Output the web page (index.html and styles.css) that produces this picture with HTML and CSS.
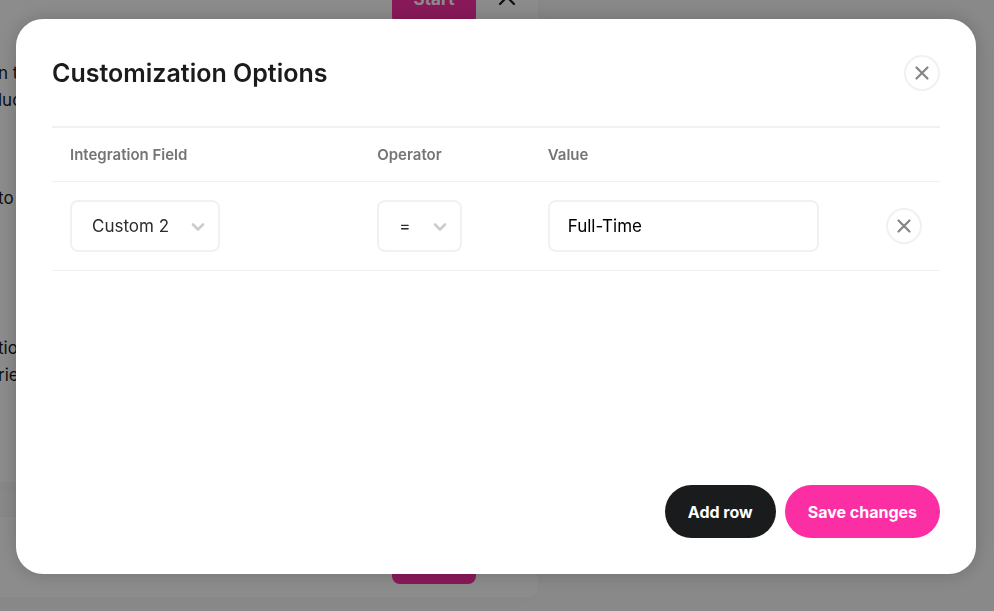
FILE: index.html
```
<!DOCTYPE html>
<html lang="en">
<head>
    <meta charset="UTF-8">
    <meta name="viewport" content="width=device-width, initial-scale=1.0">
    <title>Customization Options</title>
    <link rel="stylesheet" href="styles.css">
</head>
<body>
    <!-- Page behind the modal -->
    <main class="page">
        <section class="card card-open">
            <div class="card-actions">
                <button type="button" class="start-button">Start</button>
                <button type="button" class="collapse-button" aria-label="Collapse">
                    <svg width="18" height="12" viewBox="0 0 18 12" fill="none" stroke="#1a1b1c" stroke-width="2.2" stroke-linecap="round"><path d="M2 10 9 3l7 7"/></svg>
                </button>
            </div>
            <div class="card-text">
                <p>n th<br>luc</p>
                <p>to</p>
                <p>tio<br>rie</p>
            </div>
        </section>
        <section class="card">
            <div class="card-actions">
                <button type="button" class="start-button" aria-label="Start"></button>
            </div>
        </section>
    </main>

    <div class="overlay">
        <div class="modal" role="dialog" aria-modal="true" aria-labelledby="modalTitle">
            <header class="modal-header">
                <h1 id="modalTitle">Customization Options</h1>
                <button type="button" class="round-button" aria-label="Close">
                    <svg width="16" height="16" viewBox="0 0 16 16" fill="none" stroke="#858585" stroke-width="2.2" stroke-linecap="round"><path d="M2.5 2.5l11 11M13.5 2.5l-11 11"/></svg>
                </button>
            </header>

            <table class="options">
                <thead>
                    <tr>
                        <th class="col-field">Integration Field</th>
                        <th class="col-operator">Operator</th>
                        <th class="col-value">Value</th>
                        <th class="col-remove"></th>
                    </tr>
                </thead>
                <tbody>
                    <tr>
                        <td>
                            <div class="select-box select-field">
                                <select aria-label="Integration Field">
                                    <option>Custom 2</option>
                                </select>
                                <svg width="14" height="10" viewBox="0 0 14 10" fill="none" stroke="#cccccc" stroke-width="2.6" stroke-linecap="round" stroke-linejoin="round"><path d="M2 2.5 7 7.5l5-5"/></svg>
                            </div>
                        </td>
                        <td>
                            <div class="select-box select-operator">
                                <select aria-label="Operator">
                                    <option>=</option>
                                </select>
                                <svg width="14" height="10" viewBox="0 0 14 10" fill="none" stroke="#cccccc" stroke-width="2.6" stroke-linecap="round" stroke-linejoin="round"><path d="M2 2.5 7 7.5l5-5"/></svg>
                            </div>
                        </td>
                        <td>
                            <input type="text" class="value-input" aria-label="Value" value="Full-Time">
                        </td>
                        <td class="col-remove">
                            <button type="button" class="round-button" aria-label="Remove row">
                                <svg width="16" height="16" viewBox="0 0 16 16" fill="none" stroke="#858585" stroke-width="2.2" stroke-linecap="round"><path d="M2.5 2.5l11 11M13.5 2.5l-11 11"/></svg>
                            </button>
                        </td>
                    </tr>
                </tbody>
            </table>

            <footer class="modal-footer">
                <button type="button" class="btn btn-dark">Add row</button>
                <button type="button" class="btn btn-pink">Save changes</button>
            </footer>
        </div>
    </div>
</body>
</html>
```
FILE: styles.css
```
* {
    box-sizing: border-box;
}

body {
    margin: 0;
    height: 100vh;
    overflow: hidden;
    background: #f9f9f9;
    font-family: "Inter", "Liberation Sans", sans-serif;
    color: #1a1b1c;
}

button,
input,
select {
    font-family: inherit;
}

button {
    cursor: pointer;
}

/* Page behind the modal */
.page {
    display: flex;
    flex-direction: column;
    gap: 35px;
    width: 558px;
    margin: -42px 0 0 -20px;
}

.card {
    min-height: 80px;
    padding: 15px 20px 13px 18px;
    border-radius: 10px;
    background: #fff;
    box-shadow: 0 4px 30px rgba(0, 0, 0, 0.01);
}

.card-open {
    min-height: 524px;
}

.card-actions {
    display: flex;
    gap: 22px;
    padding-left: 394px;
}

.start-button {
    width: 84px;
    height: 52px;
    border: none;
    border-radius: 8px;
    background: #f92fa3;
    color: #fff;
    font-size: 17px;
    font-weight: 700;
}

.collapse-button {
    height: 56px;
    padding: 0;
    border: none;
    background: none;
}

.card-text {
    padding-top: 31px;
    font-size: 17px;
    line-height: 27px;
}

.card-text p {
    margin: 0 0 71px;
}

.card-text p + p {
    margin-bottom: 123px;
}

.card-text p:last-child {
    margin-bottom: 0;
}

/* Modal */
.overlay {
    position: fixed;
    inset: 0;
    display: flex;
    padding: 19px 18px 37px 16px;
    background: rgba(0, 0, 0, 0.45);
}

.modal {
    display: flex;
    flex: 1;
    flex-direction: column;
    padding: 36px;
    border-radius: 27px;
    background: #fff;
    box-shadow: 0 0 20px rgba(0, 0, 0, 0.2);
}

.modal-header {
    display: flex;
    justify-content: space-between;
    align-items: center;
    padding-bottom: 35px;
}

h1 {
    margin: 0;
    font-size: 25px;
    font-weight: 600;
}

.round-button {
    display: inline-flex;
    justify-content: center;
    align-items: center;
    width: 36px;
    height: 36px;
    padding: 0;
    border: 2px solid #f1f1f1;
    border-radius: 50%;
    background: #fff;
    vertical-align: middle;
}

/* Options table */
.options {
    width: 100%;
    table-layout: fixed;
    border-spacing: 0;
    border-top: 2px solid #f1f1f1;
}

th,
td {
    padding: 18px;
    border-bottom: 1px solid #f1f1f1;
    text-align: left;
}

th {
    padding: 17px 18px;
    color: #757575;
    font-size: 15px;
    font-weight: 600;
    line-height: 19px;
}

.col-field {
    width: 34.6%;
}

.col-operator {
    width: 19.2%;
}

.col-value {
    width: 34.6%;
}

.col-remove {
    text-align: right;
}

.select-box {
    position: relative;
}

.select-box svg {
    position: absolute;
    top: 22px;
    right: 15px;
    pointer-events: none;
}

.select-field {
    width: 150px;
}

.select-operator {
    width: 85px;
}

select,
.value-input {
    display: block;
    width: 100%;
    height: 52px;
    border: 2px solid #f1f1f1;
    border-radius: 8px;
    background: #fff;
    font-size: 17px;
}

select {
    appearance: none;
    padding: 0 36px 0 20px;
    color: #2b2b2b;
}

.value-input {
    padding: 0 18px;
    color: #000;
}

/* Footer buttons */
.modal-footer {
    display: flex;
    justify-content: flex-end;
    gap: 9px;
    margin-top: auto;
}

.btn {
    height: 53px;
    padding: 0 23px;
    border: none;
    border-radius: 27px;
    color: #fff;
    font-size: 16px;
    font-weight: 700;
}

.btn-dark {
    background: #1a1b1c;
}

.btn-pink {
    background: #fb2ea4;
}
```
